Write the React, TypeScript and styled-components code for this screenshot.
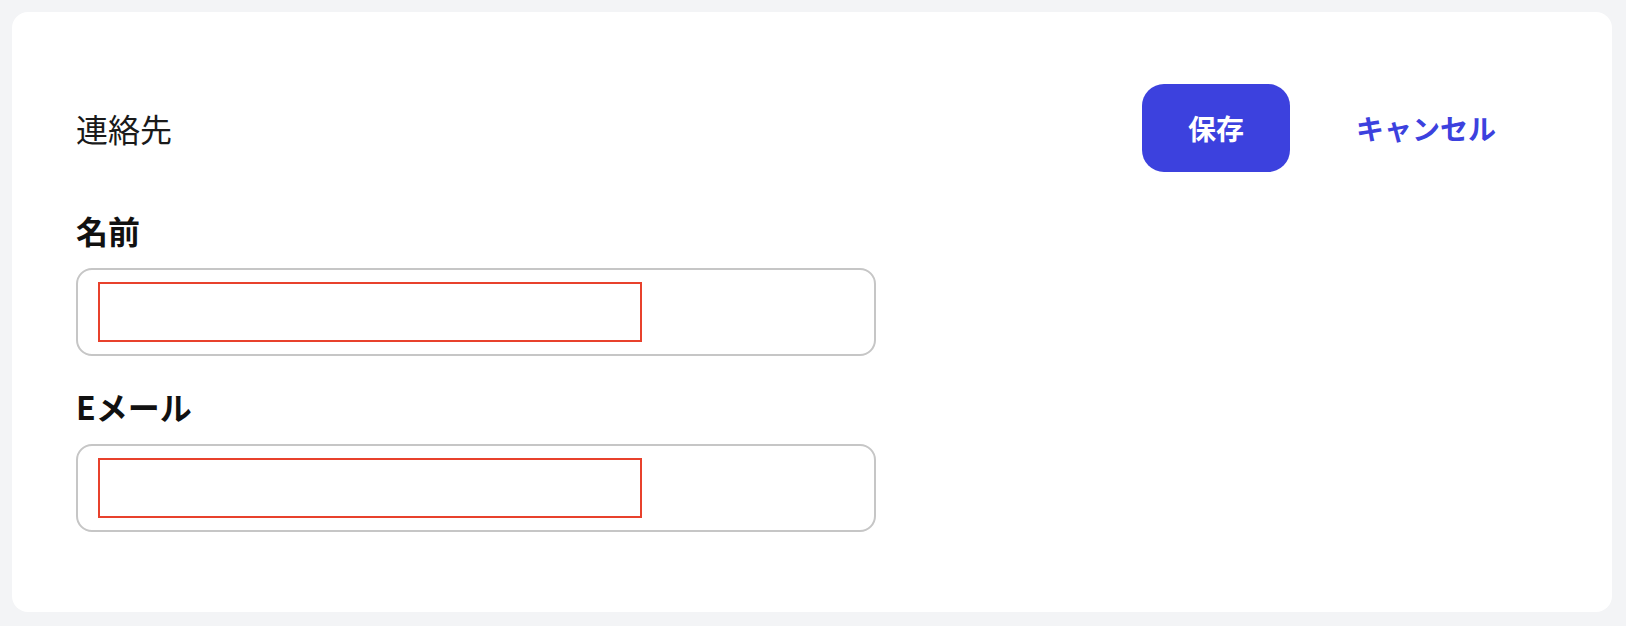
import styled, { createGlobalStyle } from "styled-components";

const GlobalStyle = createGlobalStyle`
  html, body {
    margin: 0;
    padding: 0;
    background: #f3f4f6;
    font-family: "Noto Sans CJK JP", "Noto Sans", sans-serif;
  }
  * {
    box-sizing: border-box;
  }
`;

const Card = styled.section`
  width: 1600px;
  height: 600px;
  margin: 12px;
  padding: 72px 64px 80px 64px;
  background: #ffffff;
  border-radius: 16px;
  display: flex;
  flex-direction: column;
`;

const Header = styled.header`
  display: flex;
  justify-content: space-between;
  align-items: center;
  margin-bottom: 34px;
`;

const Title = styled.h2`
  margin: 0;
  font-size: 32px;
  font-weight: 400;
  line-height: 1.5;
  color: #1a1a1a;
`;

const Actions = styled.div`
  display: flex;
  align-items: center;
  gap: 20px;
  padding-right: 6px;
`;

const Button = styled.button<{ primary?: boolean }>`
  height: 88px;
  padding: 0 46px;
  border: none;
  border-radius: 22px;
  font-family: inherit;
  font-size: 28px;
  font-weight: 700;
  cursor: pointer;
  background: ${(props) => (props.primary ? "#3c41de" : "transparent")};
  color: ${(props) => (props.primary ? "#ffffff" : "#3c41de")};
`;

const Field = styled.div`
  display: flex;
  flex-direction: column;
  gap: 14px;

  & + & {
    margin-top: 26px;
  }
`;

const Label = styled.label`
  font-size: 32px;
  font-weight: 700;
  line-height: 1.5;
  color: #111111;
`;

const InputFrame = styled.div`
  width: 800px;
  height: 88px;
  padding: 12px 20px;
  border: 2px solid #c6c6c6;
  border-radius: 16px;
  display: flex;
  align-items: center;
`;

const TextInput = styled.input`
  width: 544px;
  height: 60px;
  border: 2px solid #e8412c;
  border-radius: 0;
  padding: 0 12px;
  font-family: inherit;
  font-size: 24px;
  outline: none;
  background: #ffffff;
`;

const App = () => {
  return (
    <>
      <GlobalStyle />
      <Card>
        <Header>
          <Title>連絡先</Title>
          <Actions>
            <Button primary>保存</Button>
            <Button>キャンセル</Button>
          </Actions>
        </Header>
        <Field>
          <Label htmlFor="name">名前</Label>
          <InputFrame>
            <TextInput id="name" type="text" />
          </InputFrame>
        </Field>
        <Field>
          <Label htmlFor="email">Eメール</Label>
          <InputFrame>
            <TextInput id="email" type="email" />
          </InputFrame>
        </Field>
      </Card>
    </>
  );
};

export default App;
